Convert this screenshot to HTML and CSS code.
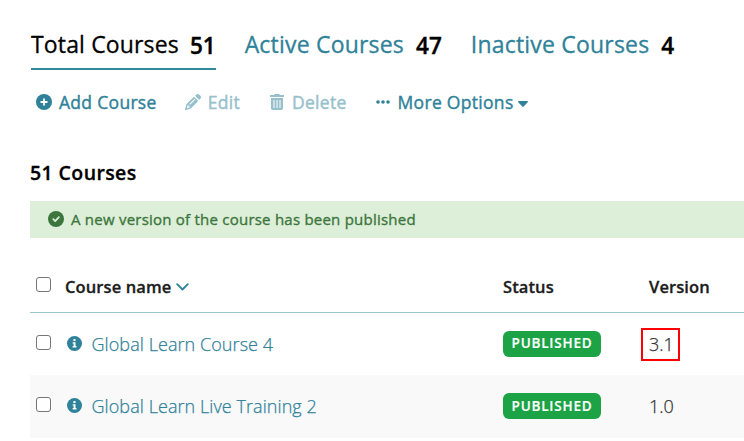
FILE: index.html
```html
<!DOCTYPE html>
<html lang="en" dir="ltr">
  <head>
    <meta charset="UTF-8" />
    <meta name="viewport" content="width=device-width, initial-scale=1.0" />
    <title>Courses</title>
    <link rel="stylesheet" href="styles.css">
  </head>
  <body>
    <svg class="sprite" width="0" height="0" aria-hidden="true">
      <symbol id="icon-info" viewBox="0 0 16 16">
        <circle cx="8" cy="8" r="8" fill="currentColor" />
        <rect x="6.8" y="3.2" width="2.3" height="2.2" fill="#fff" />
        <path d="M6 6.6h3.1v4.1h1v1.5H6v-1.5h1V8.1H6z" fill="#fff" />
      </symbol>
    </svg>

    <nav class="tabs">
      <a class="tab active"><span class="tab-label">Total Courses</span><span class="tab-count">51</span></a>
      <a class="tab"><span class="tab-label">Active Courses</span><span class="tab-count">47</span></a>
      <a class="tab"><span class="tab-label">Inactive Courses</span><span class="tab-count">4</span></a>
    </nav>

    <div class="toolbar">
      <a class="tool add">
        <svg width="16" height="16" viewBox="0 0 16 16">
          <circle cx="8" cy="8" r="8" fill="currentColor" />
          <path d="M8 5.200v5.600M5.200 8h5.600" stroke="#fff" stroke-width="1.800" stroke-linecap="round" />
        </svg>
        <span>Add Course</span>
      </a>
      <a class="tool edit disabled">
        <svg width="16" height="16" viewBox="0 0 512 512" fill="currentColor">
          <path d="M410 231l11-11-34-34-34-34-34-34-34-34-11 11L60 310c-11 11-19 24-23 38L1 481c-3 8 0 17 6 24s15 9 24 6l133-39c14-4 28-12 38-23l215-214zM160 399l-9 23c-4 3-9 6-14 7L59 452l23-78c1-5 4-10 7-14l23-9v32c0 9 7 16 16 16zM363 19l-15 14-14 15-11 11 34 34 34 34 34 34 28 28 11-11 14-14 15-15c25-25 25-66 0-91l-40-39c-25-25-65-25-90 0zm-48 172L171 335c-6 6-17 6-23 0s-6-17 0-23l144-144c6-6 17-6 23 0s6 17 0 23z" />
        </svg>
        <span>Edit</span>
      </a>
      <a class="tool delete disabled">
        <svg width="14" height="16" viewBox="0 0 14 16">
          <path d="M0 1h4l.7-1h4.6L10 1h4v2H0z" fill="currentColor" />
          <path fill-rule="evenodd" d="M1 4h12v10.3c0 1-.7 1.7-1.7 1.7H2.7C1.7 16 1 15.300 1 14.300zM3.500 6v8h1V6zM6.500 6v8h1V6zM9.500 6v8h1V6z" fill="currentColor" />
        </svg>
        <span>Delete</span>
      </a>
      <a class="tool more">
        <svg width="14" height="16" viewBox="0 0 14 16" fill="currentColor">
          <circle cx="2" cy="8" r="1.800" />
          <circle cx="7" cy="8" r="1.800" />
          <circle cx="12" cy="8" r="1.800" />
        </svg>
        <span>More Options</span>
        <svg class="caret" width="10" height="6" viewBox="0 0 10 6">
          <path d="M.8 0h8.400c.7 0 1 .8.5 1.300L5.700 5.500a1 1 0 0 1-1.400 0L.3 1.300C-.2.8.1 0 .8 0z" fill="currentColor" />
        </svg>
      </a>
    </div>

    <h1 class="page-title">51 Courses</h1>

    <div class="alert">
      <svg width="16" height="16" viewBox="0 0 16 16">
        <circle cx="8" cy="8" r="8" fill="currentColor" />
        <path d="M5.300 8.200l1.900 1.900L10.900 6.200" fill="none" stroke="#deefd9" stroke-width="1.700" stroke-linecap="round" stroke-linejoin="round" />
      </svg>
      <span>A new version of the course has been published</span>
    </div>

    <div class="table">
      <div class="row head">
        <div><input type="checkbox" class="check"></div>
        <div class="name-head">
          <span>Course name</span>
          <svg width="13" height="8" viewBox="0 0 13 8">
            <path d="M1.200 1.200l5.300 5.300 5.300-5.300" fill="none" stroke="currentColor" stroke-width="1.900" stroke-linecap="round" stroke-linejoin="round" />
          </svg>
        </div>
        <div>Status</div>
        <div>Version</div>
      </div>
      <div class="row">
        <div><input type="checkbox" class="check"></div>
        <div class="course">
          <svg width="15" height="15"><use href="#icon-info" /></svg>
          <a>Global Learn Course 4</a>
        </div>
        <div><span class="badge">PUBLISHED</span></div>
        <div><span class="version highlight">3.1</span></div>
      </div>
      <div class="row striped">
        <div><input type="checkbox" class="check"></div>
        <div class="course">
          <svg width="15" height="15"><use href="#icon-info" /></svg>
          <a>Global Learn Live Training 2</a>
        </div>
        <div><span class="badge">PUBLISHED</span></div>
        <div><span class="version">1.0</span></div>
      </div>
    </div>
  </body>
</html>
```

FILE: styles.css
```css
* {
  margin: 0;
  padding: 0;
  box-sizing: border-box;
}

body {
  font-family: 'Open Sans', 'Noto Sans', sans-serif;
  background: #fff;
  color: #000;
  padding: 20px 0 0 30px;
  overflow: hidden;
}

svg {
  display: block;
  flex: none;
}

.sprite {
  position: absolute;
}

.tabs {
  display: flex;
  gap: 29px;
  height: 50px;
  padding-left: 1px;
  white-space: nowrap;
}

.tab {
  display: flex;
  gap: 12px;
  color: #2f8299;
  font-size: 23px;
  line-height: 48px;
}

.tab.active {
  gap: 11px;
  color: #000;
  border-bottom: 2px solid #2f8a9b;
}

.tab-label {
  letter-spacing: 0.2px;
  -webkit-text-stroke: 0.3px currentColor;
}

.active .tab-label {
  letter-spacing: 0.15px;
}

.tab-count {
  color: #000;
  font-weight: 600;
  font-size: 22.5px;
  line-height: 52px;
  -webkit-text-stroke: 0.4px currentColor;
}

.toolbar {
  display: flex;
  height: 66px;
  padding: 0 0 2px 6px;
  color: #2f8299;
  font-size: 17.5px;
  letter-spacing: 0.3px;
  white-space: nowrap;
  -webkit-text-stroke: 0.4px currentColor;
}

.tool {
  display: flex;
  align-items: center;
  gap: 7px;
}

.tool.disabled {
  color: #97c0cc;
}

.edit {
  margin-left: 28px;
}

.delete {
  margin-left: 30px;
}

.tool.delete {
  gap: 8px;
}

.more {
  margin-left: 29px;
}

.tool.more {
  gap: 8px;
}

.more .caret {
  margin-left: -4px;
  margin-top: 3px;
}

.page-title {
  height: 67px;
  margin-top: -2px;
  line-height: 78px;
  font-size: 19.5px;
  font-weight: 600;
  letter-spacing: 0.4px;
  -webkit-text-stroke: 0.3px currentColor;
}

.alert {
  display: flex;
  align-items: center;
  gap: 7px;
  height: 37px;
  padding: 0 0 1px 18px;
  background: #deefd9;
  color: #3c763d;
  font-size: 15px;
  letter-spacing: 0.23px;
  -webkit-text-stroke: 0.35px currentColor;
}

.row {
  display: grid;
  grid-template-columns: 35px 438px 146px 1fr;
  align-items: center;
  height: 62px;
  color: #333;
  font-size: 18px;
}

.row.head {
  height: 75px;
  padding-top: 23px;
  border-bottom: 1px solid #9cc4ce;
  color: #1c1c1c;
  font-size: 16.5px;
  font-weight: 600;
  letter-spacing: 0.1px;
  -webkit-text-stroke: 0.3px currentColor;
}

.row.striped {
  height: 63px;
  background: #f9f9f9;
}

.check {
  appearance: none;
  display: block;
  width: 15px;
  height: 15px;
  margin: -4px 0 0 6px;
  border: 1px solid #767676;
  border-radius: 3px;
  background: #fff;
}

.name-head {
  display: flex;
  align-items: center;
  gap: 5px;
}

.name-head svg {
  color: #2f8299;
}

.course {
  display: flex;
  align-items: center;
  gap: 10px;
  margin-top: -1px;
  padding-left: 1.5px;
  color: #2f8299;
  font-weight: 300;
}

.course svg {
  margin-top: -1px;
}

.course a {
  letter-spacing: 0.07px;
  -webkit-text-stroke: 0.25px currentColor;
}

.badge {
  display: block;
  width: 98px;
  height: 26px;
  border-radius: 6px;
  background: #1ba345;
  color: #fff;
  font-size: 13.5px;
  font-weight: 600;
  letter-spacing: 0.8px;
  line-height: 25px;
  text-align: center;
  -webkit-text-stroke: 0.2px currentColor;
}

.version {
  font-weight: 300;
  -webkit-text-stroke: 0.25px currentColor;
}

.striped .badge,
.striped .version {
  display: block;
  margin-top: -1px;
}

.striped .badge {
  line-height: 27px;
}

.highlight {
  display: block;
  width: 39px;
  height: 33px;
  margin-left: -8px;
  padding-left: 6px;
  border: 2px solid #f00;
  line-height: 29px;
}
```
